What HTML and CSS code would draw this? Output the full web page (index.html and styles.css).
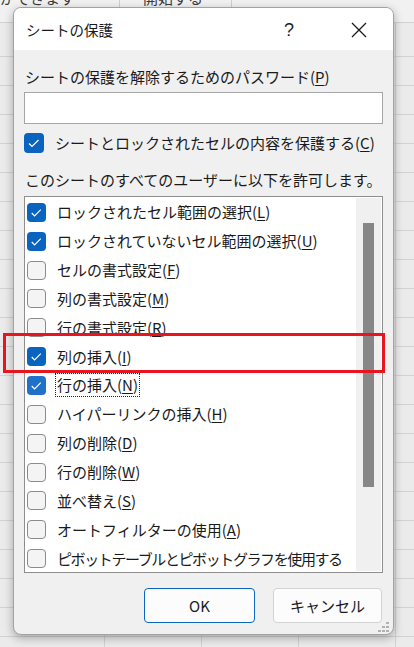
FILE: index.html
```html
<!DOCTYPE html>
<html lang="ja">
<head>
<meta charset="utf-8">
<title>シートの保護</title>
<link rel="stylesheet" href="styles.css">
</head>
<body>
<div class="sheet">
  <div class="sheet-top">
    <div class="cell c1"><span class="cell-text">とができます</span></div>
    <div class="cell c2"><span class="cell-text">開始する</span></div>
    <div class="cell c3"></div>
  </div>
  <div class="sheet-grid"></div>
</div>

<div class="dialog">
  <div class="titlebar">
    <span class="title">シートの保護</span>
    <span class="help">?</span>
    <span class="close">
      <svg width="16" height="16" viewBox="0 0 16 16"><path d="M1 1 L15 15 M15 1 L1 15" stroke="#1a1a1a" stroke-width="1.3" fill="none"/></svg>
    </span>
  </div>
  <div class="body">
    <div class="label">シートの保護を解除するためのパスワード(<u>P</u>)</div>
    <div class="input"></div>
    <div class="check-row">
      <span class="box big checked"><svg viewBox="0 0 20 20"><polyline points="5,10.5 8,13.5 14.5,7" fill="none" stroke="#fff" stroke-width="1.2"/></svg></span>
      <span>シートとロックされたセルの内容を保護する(<u>C</u>)</span>
    </div>
    <div class="label label2">このシートのすべてのユーザーに以下を許可します。</div>
    <div class="list">
      <div class="items">
        <div class="item"><span class="box checked"><svg viewBox="0 0 20 20"><polyline points="5,10.5 8,13.5 14.5,7" fill="none" stroke="#fff" stroke-width="1.2"/></svg></span><span>ロックされたセル範囲の選択(<u>L</u>)</span></div>
        <div class="item"><span class="box checked"><svg viewBox="0 0 20 20"><polyline points="5,10.5 8,13.5 14.5,7" fill="none" stroke="#fff" stroke-width="1.2"/></svg></span><span>ロックされていないセル範囲の選択(<u>U</u>)</span></div>
        <div class="item"><span class="box"></span><span>セルの書式設定(<u>F</u>)</span></div>
        <div class="item"><span class="box"></span><span>列の書式設定(<u>M</u>)</span></div>
        <div class="item"><span class="box"></span><span>行の書式設定(<u>R</u>)</span></div>
        <div class="item"><span class="box checked"><svg viewBox="0 0 20 20"><polyline points="5,10.5 8,13.5 14.5,7" fill="none" stroke="#fff" stroke-width="1.2"/></svg></span><span>列の挿入(<u>I</u>)</span></div>
        <div class="item"><span class="box checked hover"><svg viewBox="0 0 20 20"><polyline points="5,10.5 8,13.5 14.5,7" fill="none" stroke="#fff" stroke-width="1.2"/></svg></span><span class="focus">行の挿入(<u>N</u>)</span></div>
        <div class="item"><span class="box"></span><span>ハイパーリンクの挿入(<u>H</u>)</span></div>
        <div class="item"><span class="box"></span><span>列の削除(<u>D</u>)</span></div>
        <div class="item"><span class="box"></span><span>行の削除(<u>W</u>)</span></div>
        <div class="item"><span class="box"></span><span>並べ替え(<u>S</u>)</span></div>
        <div class="item"><span class="box"></span><span>オートフィルターの使用(<u>A</u>)</span></div>
        <div class="item"><span class="box"></span><span class="tight">ピボットテーブルとピボットグラフを使用する</span></div>
      </div>
      <div class="scroll"><div class="thumb"></div></div>
    </div>
    <div class="buttons">
      <button class="btn ok">OK</button>
      <button class="btn cancel">キャンセル</button>
    </div>
  </div>
  <svg class="grip" width="12" height="10" viewBox="0 0 12 10">
    <rect x="8" y="0" width="3" height="2" fill="#b0b0b0"/>
    <rect x="4" y="4" width="3" height="2" fill="#b0b0b0"/>
    <rect x="8" y="4" width="3" height="2" fill="#b0b0b0"/>
    <rect x="0" y="8" width="3" height="2" fill="#b0b0b0"/>
    <rect x="4" y="8" width="3" height="2" fill="#b0b0b0"/>
    <rect x="8" y="8" width="3" height="2" fill="#b0b0b0"/>
  </svg>
</div>

<div class="highlight"></div>
</body>
</html>
```

FILE: styles.css
```css
html, body {
  margin: 0;
  padding: 0;
}
body {
  width: 414px;
  height: 647px;
  overflow: hidden;
  position: relative;
  background: #ebebeb;
  font-family: "Noto Sans CJK JP", "Noto Sans", sans-serif;
  color: #1a1a1a;
}

/* background spreadsheet */
.sheet {
  display: flex;
  flex-direction: column;
}
.sheet-top {
  display: flex;
  height: 23px;
  box-sizing: border-box;
  border-bottom: 1px solid #d2d2d2;
  background: #f1f1f1;
  overflow: hidden;
}
.cell {
  box-sizing: border-box;
  border-right: 1px solid #cfcfcf;
  overflow: hidden;
}
.c1 { width: 120px; }
.c2 { width: 112px; }
.c3 { flex: 1; border-right: none; }
.cell-text {
  display: block;
  font-size: 15px;
  line-height: 20px;
  margin-top: -12px;
  white-space: nowrap;
  color: #3a3a3a;
}
.c1 .cell-text { margin-left: -15px; }
.c2 .cell-text { padding-left: 23px; }
.sheet-grid {
  height: 624px;
  background-color: #ebebeb;
  background-image:
    linear-gradient(#d2d2d2, #d2d2d2),
    linear-gradient(#d2d2d2, #d2d2d2),
    linear-gradient(#d2d2d2, #d2d2d2),
    linear-gradient(#d2d2d2, #d2d2d2),
    repeating-linear-gradient(to bottom, transparent 0 28px, #d2d2d2 28px 29px);
  background-size: 1px 100%, 1px 100%, 1px 100%, 1px 100%, 100% 100%;
  background-position: 104px 0, 201px 0, 298px 0, 395px 0, 0 5px;
  background-repeat: no-repeat, no-repeat, no-repeat, no-repeat, repeat;
}

/* dialog */
.dialog {
  position: absolute;
  left: 13px;
  top: 7px;
  width: 381px;
  height: 628px;
  box-sizing: border-box;
  border: 1px solid #a2a2a2;
  border-radius: 8px;
  background: #f0f0f0;
  box-shadow: 0 3px 10px rgba(0, 0, 0, 0.3);
  overflow: hidden;
  display: flex;
  flex-direction: column;
}
.titlebar {
  height: 42px;
  flex: none;
  background: #ffffff;
  display: flex;
  align-items: center;
  padding-left: 12px;
  padding-top: 1px;
  box-sizing: border-box;
}
.title {
  font-size: 14.5px;
  line-height: 20px;
  flex: 1;
}
.help {
  width: 20px;
  text-align: center;
  font-family: "Liberation Sans", sans-serif;
  font-size: 18px;
  line-height: 20px;
  color: #1f1f1f;
  margin-right: 45px;
}
.close {
  width: 30px;
  display: flex;
  justify-content: center;
  margin-right: 19px;
}

.body {
  flex: 1;
  display: flex;
  flex-direction: column;
  padding: 0 10px;
}
.label {
  margin-top: 17px;
  font-size: 15px;
  line-height: 20px;
  padding-left: 1px;
  white-space: nowrap;
}
.label2 {
  letter-spacing: 0;
}
u {
  text-decoration-thickness: 1px;
  text-underline-offset: 2px;
}
.input {
  margin-top: 5px;
  height: 32px;
  box-sizing: border-box;
  border: 1px solid #a6a6a6;
  background: #ffffff;
}
.check-row {
  margin-top: 9px;
  height: 20px;
  display: flex;
  align-items: center;
  gap: 11px;
  font-size: 15px;
  line-height: 20px;
  white-space: nowrap;
}

.box {
  flex: none;
  width: 19px;
  height: 19px;
  box-sizing: border-box;
  border: 1px solid #8b8b8b;
  border-radius: 4px;
  background: #f4f4f4;
  display: flex;
}
.box.big {
  width: 20px;
  height: 20px;
}
.box svg {
  width: 100%;
  height: 100%;
}
.box.checked {
  border: none;
  background: #0a63bf;
}
.box.checked.hover {
  background: #1f72c8;
}

.list {
  margin-top: 6px;
  height: 377px;
  box-sizing: border-box;
  border: 1px solid #8e8e8e;
  background: #ffffff;
  display: flex;
}
.items {
  flex: 1;
  padding-top: 1px;
}
.item {
  height: 28.85px;
  display: flex;
  align-items: center;
  gap: 11px;
  padding-left: 2px;
  font-size: 15px;
  line-height: 20px;
  white-space: nowrap;
}
.tight {
  letter-spacing: -1.4px;
}
.focus {
  outline: 1px dotted #222;
  line-height: 22px;
  padding: 0 1px;
  margin-left: -1px;
}
.scroll {
  width: 25px;
  margin: 1px 1px 1px 0;
  background: #f0f0f0;
  display: flex;
  justify-content: center;
}
.thumb {
  width: 11px;
  height: 264px;
  margin-top: 25px;
  background: #878787;
}

.buttons {
  margin-top: 15px;
  display: flex;
  justify-content: flex-end;
  gap: 18px;
  padding-right: 1px;
}
.btn {
  height: 35px;
  box-sizing: border-box;
  border: 1px solid #d3d3d3;
  border-radius: 4px;
  background: #fcfcfc;
  font-family: "Noto Sans CJK JP", "Noto Sans", sans-serif;
  font-size: 15px;
  color: #1a1a1a;
  padding: 0;
}
.ok {
  width: 111px;
  border-color: #0b67c2;
}
.cancel {
  width: 109px;
}
.grip {
  position: absolute;
  right: 3px;
  bottom: 2px;
}

/* annotation */
.highlight {
  position: absolute;
  left: 3px;
  top: 333px;
  width: 382px;
  height: 40px;
  box-sizing: border-box;
  border: 3px solid #e8141e;
}
```
